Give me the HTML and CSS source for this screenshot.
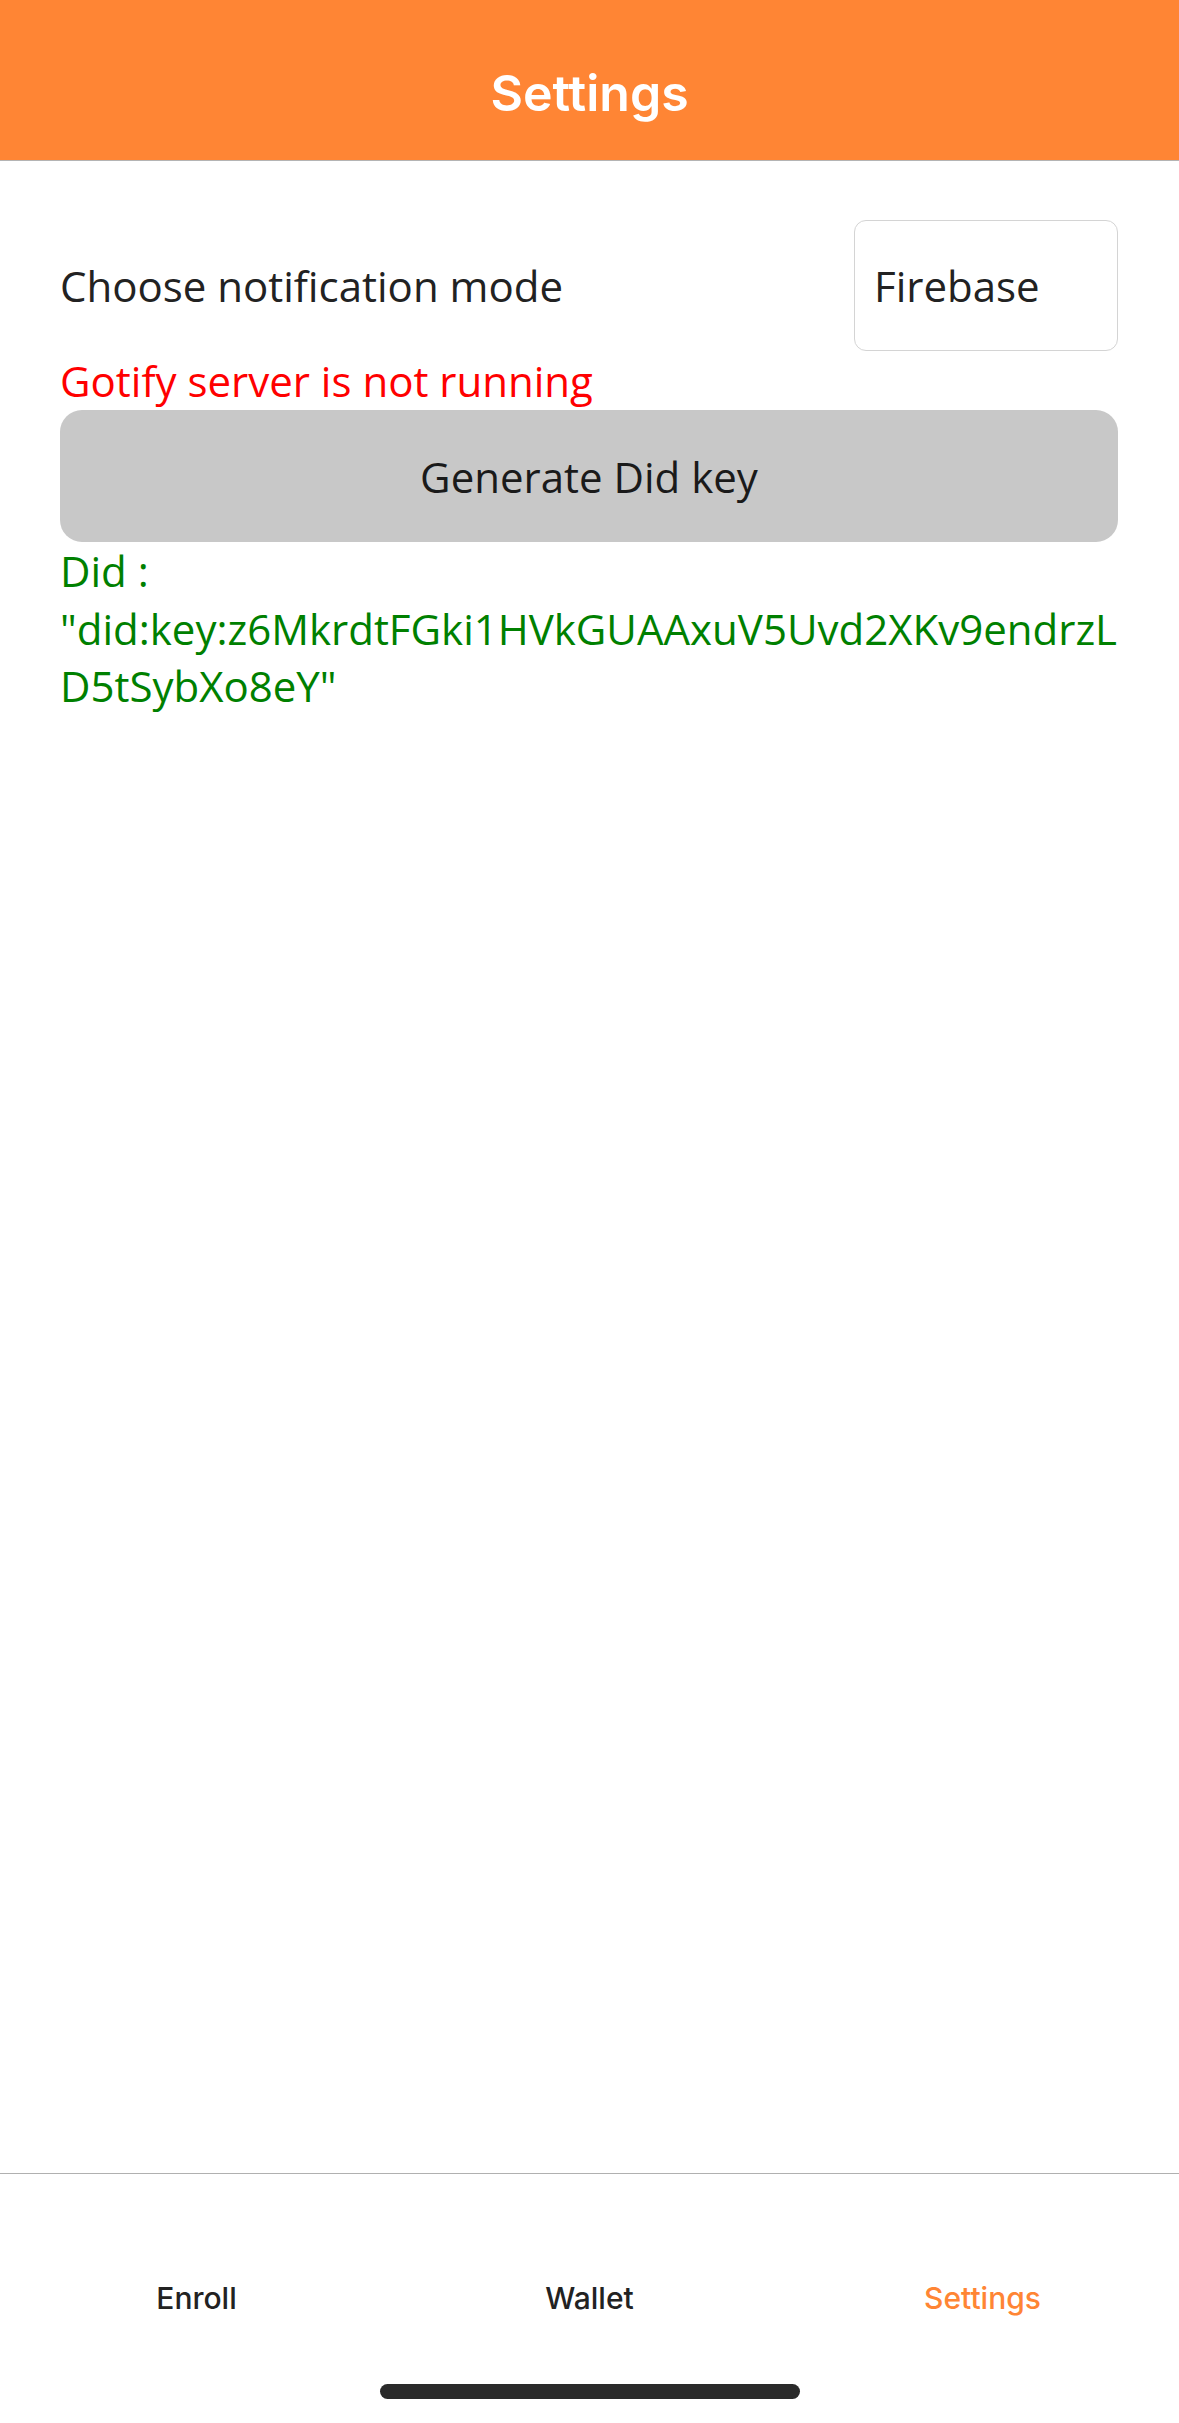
FILE: index.html
```html
<!DOCTYPE html>
<html lang="en">
<head>
<meta charset="utf-8">
<title>Settings</title>
<link rel="stylesheet" href="styles.css">
</head>
<body>
<div class="app">
  <header class="header">
    <h1 class="header-title">Settings</h1>
  </header>
  <main class="content">
    <div class="mode-row">
      <span class="mode-label">Choose notification mode</span>
      <div class="picker">Firebase</div>
    </div>
    <div class="error-text">Gotify server is not running</div>
    <button class="gen-btn" type="button">Generate Did key</button>
    <div class="did-text">Did : "did:key:z6MkrdtFGki1HVkGUAAxuV5Uvd2XKv9endrzLD5tSybXo8eY"</div>
  </main>
  <nav class="tabbar">
    <div class="tabs">
      <div class="tab">Enroll</div>
      <div class="tab">Wallet</div>
      <div class="tab tab-active">Settings</div>
    </div>
    <div class="home-indicator"></div>
  </nav>
</div>
</body>
</html>
```
FILE: styles.css
```css
* {
  box-sizing: border-box;
}
html, body {
  margin: 0;
  padding: 0;
  background: #ffffff;
}
.app {
  width: 1179px;
  height: 2423px;
  display: flex;
  flex-direction: column;
  font-family: "Open Sans", "Noto Sans", sans-serif;
}
.header {
  height: 161px;
  background: #ff8534;
  border-bottom: 1px solid #b4b4b4;
  padding-top: 63px;
  text-align: center;
  flex: none;
}
.header-title {
  margin: 0;
  font-family: Inter, "Liberation Sans", sans-serif;
  font-weight: 600;
  font-size: 50px;
  line-height: 60px;
  color: #ffffff;
}
.content {
  flex: 1;
  padding: 59px 61px 0 60px;
  display: flex;
  flex-direction: column;
}
.mode-row {
  display: flex;
  justify-content: space-between;
  align-items: center;
  height: 131px;
}
.mode-label {
  font-size: 42px;
  color: #222222;
  line-height: 57px;
}
.picker {
  width: 264px;
  height: 131px;
  border: 1px solid #d4d4d4;
  border-radius: 12px;
  padding-left: 19px;
  display: flex;
  align-items: center;
  font-size: 42px;
  color: #222222;
}
.error-text {
  font-size: 42px;
  line-height: 57px;
  color: #ff0000;
  margin-top: 1px;
}
.gen-btn {
  margin-top: 1px;
  height: 132px;
  width: 100%;
  border: none;
  border-radius: 22px;
  background: #c8c8c8;
  font-family: "Open Sans", "Noto Sans", sans-serif;
  font-size: 42px;
  color: #1a1a1a;
  padding: 0;
}
.did-text {
  font-size: 42px;
  line-height: 57.5px;
  color: #008000;
  overflow-wrap: break-word;
}
.tabbar {
  flex: none;
  height: 250px;
  border-top: 1px solid #b0b0b0;
  padding-top: 106px;
  display: flex;
  flex-direction: column;
  align-items: center;
}
.tabs {
  display: flex;
  width: 100%;
}
.tab {
  flex: 1;
  text-align: center;
  font-family: Inter, "Liberation Sans", sans-serif;
  font-weight: 500;
  font-size: 30px;
  line-height: 36px;
  color: #222222;
}
.tab-active {
  color: #ff8534;
}
.home-indicator {
  margin-top: 68px;
  width: 420px;
  height: 15px;
  border-radius: 8px;
  background: #2a2a2a;
}
```
